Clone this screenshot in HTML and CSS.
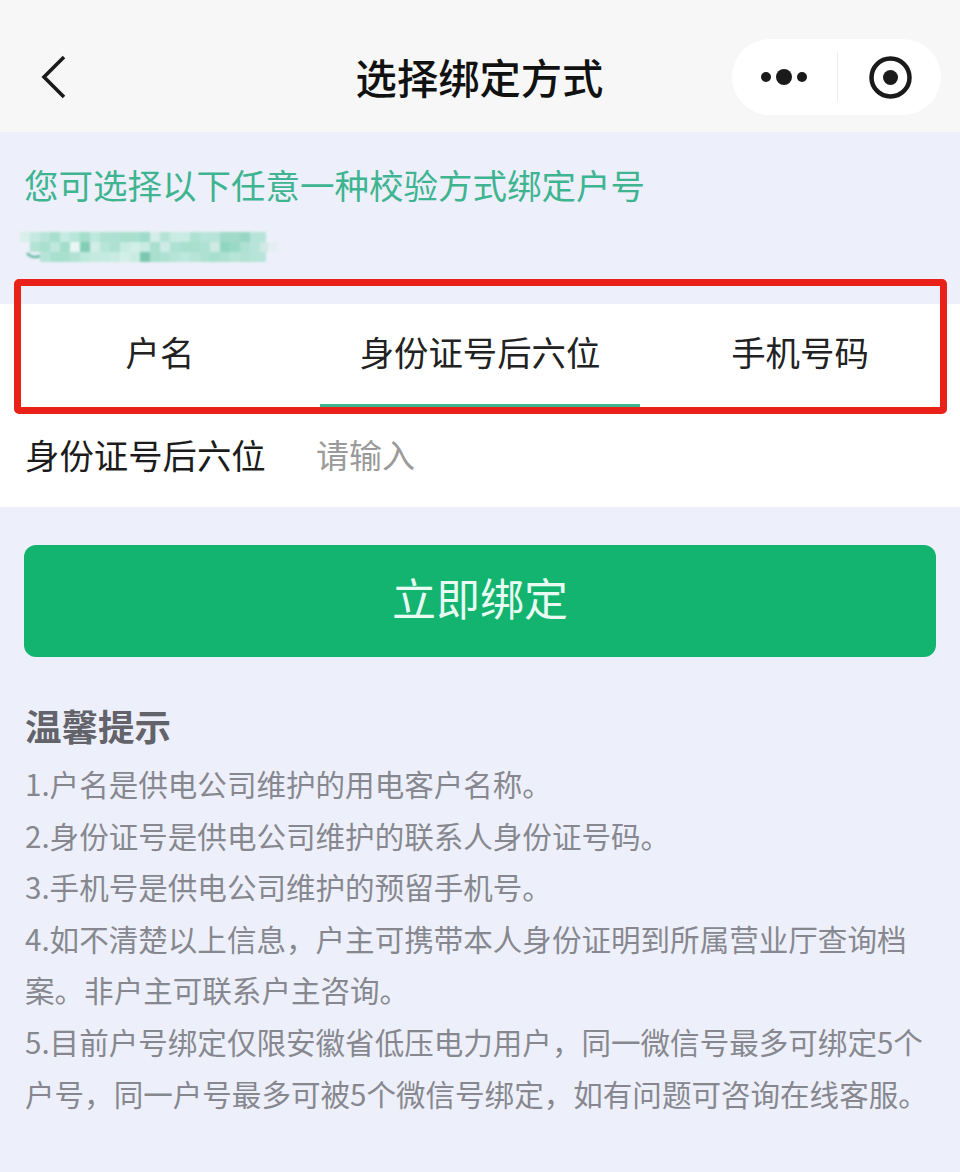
FILE: index.html
```html
<!DOCTYPE html>
<html lang="zh-CN">
<head>
<meta charset="utf-8">
<title>选择绑定方式</title>
<link rel="stylesheet" href="styles.css">
</head>
<body>
<div class="page">
  <header class="nav">
    <svg class="back" width="26" height="44" viewBox="0 0 26 44"><path d="M23 2 L3 22 L23 42" fill="none" stroke="#1a1a1a" stroke-width="3.6"/></svg>
    <h1 class="title">选择绑定方式</h1>
    <div class="capsule">
      <svg class="dots" width="46" height="18" viewBox="0 0 46 18"><circle cx="5" cy="9" r="5" fill="#1a1a1a"/><circle cx="23" cy="9" r="8" fill="#1a1a1a"/><circle cx="41" cy="9" r="5" fill="#1a1a1a"/></svg>
      <span class="sep"></span>
      <svg class="target" width="43" height="43" viewBox="0 0 43 43"><circle cx="21.5" cy="21.5" r="19" fill="none" stroke="#1a1a1a" stroke-width="4.5"/><circle cx="21.5" cy="21.5" r="7.5" fill="#1a1a1a"/></svg>
    </div>
  </header>
  <section class="intro">
    <p class="hint">您可选择以下任意一种校验方式绑定户号</p>
    <svg class="mosaic" width="257" height="30" viewBox="0 0 257 30">
      <path d="M7 21 q5 6 13 3" fill="none" stroke="#5fb8a0" stroke-width="2.5"/>
      <g>
        <rect x="0" y="0" width="10" height="10" fill="#d8efea"/><rect x="10" y="0" width="10" height="10" fill="#c5e9df"/><rect x="20" y="0" width="10" height="10" fill="#b7e4d8"/><rect x="30" y="0" width="10" height="10" fill="#a8dfcd"/><rect x="40" y="0" width="10" height="10" fill="#c5ebe1"/><rect x="50" y="0" width="10" height="10" fill="#b7e5d8"/><rect x="60" y="0" width="10" height="10" fill="#a5ddcb"/><rect x="70" y="0" width="10" height="10" fill="#bde8dc"/><rect x="80" y="0" width="10" height="10" fill="#aee1d1"/><rect x="90" y="0" width="10" height="10" fill="#aee1d1"/><rect x="100" y="0" width="10" height="10" fill="#a8dfcd"/><rect x="110" y="0" width="10" height="10" fill="#a8dfcd"/><rect x="120" y="0" width="10" height="10" fill="#a0dac8"/><rect x="130" y="0" width="10" height="10" fill="#d5ede9"/><rect x="140" y="0" width="10" height="10" fill="#b5e3d5"/><rect x="150" y="0" width="10" height="10" fill="#c9ebe2"/><rect x="160" y="0" width="10" height="10" fill="#c9ebe2"/><rect x="170" y="0" width="10" height="10" fill="#aee1d1"/><rect x="180" y="0" width="10" height="10" fill="#b7e4d8"/><rect x="190" y="0" width="10" height="10" fill="#b7e4d8"/><rect x="200" y="0" width="10" height="10" fill="#a0dac8"/><rect x="210" y="0" width="10" height="10" fill="#a0dac8"/><rect x="220" y="0" width="10" height="10" fill="#98d6c3"/><rect x="230" y="0" width="16" height="10" fill="#b7e4d8"/>
      </g>
      <g>
        <rect x="10" y="10" width="10" height="10" fill="#b2e2d3"/><rect x="20" y="10" width="10" height="10" fill="#a8dfcd"/><rect x="30" y="10" width="10" height="10" fill="#c0e8dc"/><rect x="40" y="10" width="10" height="10" fill="#a5ddcb"/><rect x="50" y="10" width="10" height="10" fill="#eaf6f4"/><rect x="60" y="10" width="10" height="10" fill="#82cdb4"/><rect x="70" y="10" width="10" height="10" fill="#d2ece6"/><rect x="80" y="10" width="10" height="10" fill="#b7e5d8"/><rect x="90" y="10" width="10" height="10" fill="#aee1d1"/><rect x="100" y="10" width="10" height="10" fill="#c9ebe2"/><rect x="110" y="10" width="10" height="10" fill="#d2efe7"/><rect x="120" y="10" width="10" height="10" fill="#c9ebe2"/><rect x="130" y="10" width="10" height="10" fill="#a8dfcd"/><rect x="140" y="10" width="10" height="10" fill="#cfeae5"/><rect x="150" y="10" width="10" height="10" fill="#aee1d1"/><rect x="160" y="10" width="10" height="10" fill="#a8dfcd"/><rect x="170" y="10" width="10" height="10" fill="#a8dfcd"/><rect x="180" y="10" width="10" height="10" fill="#aee1d1"/><rect x="190" y="10" width="10" height="10" fill="#cdeae3"/><rect x="200" y="10" width="10" height="10" fill="#8fd6bf"/><rect x="210" y="10" width="10" height="10" fill="#99d9c5"/><rect x="220" y="10" width="10" height="10" fill="#aee1d1"/><rect x="230" y="10" width="10" height="10" fill="#b7e4d8"/><rect x="240" y="10" width="8" height="10" fill="#cfeae4"/><rect x="248" y="10" width="9" height="10" fill="#e4eef2"/>
      </g>
      <g>
        <rect x="20" y="20" width="10" height="10" fill="#b7e4d8"/><rect x="30" y="20" width="10" height="10" fill="#a8dfcd"/><rect x="40" y="20" width="10" height="10" fill="#a8dfcd"/><rect x="50" y="20" width="10" height="10" fill="#b2e2d3"/><rect x="60" y="20" width="10" height="10" fill="#bde8dc"/><rect x="70" y="20" width="10" height="10" fill="#c5e9df"/><rect x="80" y="20" width="10" height="10" fill="#c5ebe1"/><rect x="90" y="20" width="10" height="10" fill="#c9ebe2"/><rect x="100" y="20" width="10" height="10" fill="#d2efe7"/><rect x="110" y="20" width="10" height="10" fill="#c9ebe2"/><rect x="120" y="20" width="10" height="10" fill="#7cc8ae"/><rect x="130" y="20" width="10" height="10" fill="#a8dfcd"/><rect x="140" y="20" width="10" height="10" fill="#aee1d1"/><rect x="150" y="20" width="10" height="10" fill="#b7e4d8"/><rect x="160" y="20" width="10" height="10" fill="#bde8dc"/><rect x="170" y="20" width="10" height="10" fill="#b7e4d8"/><rect x="180" y="20" width="10" height="10" fill="#aee1d1"/><rect x="190" y="20" width="10" height="10" fill="#a8dfcd"/><rect x="200" y="20" width="10" height="10" fill="#aee1d1"/><rect x="210" y="20" width="10" height="10" fill="#b7e4d8"/><rect x="220" y="20" width="10" height="10" fill="#b2e2d3"/><rect x="230" y="20" width="16" height="10" fill="#b7e4d8"/>
      </g>
    </svg>
  </section>
  <nav class="tabs">
    <div class="tab">户名</div>
    <div class="tab tab-active">身份证号后六位</div>
    <div class="tab">手机号码</div>
  </nav>
  <div class="field">
    <span class="field-label">身份证号后六位</span>
    <span class="field-input">请输入</span>
  </div>
  <div class="action"><button class="bind">立即绑定</button></div>
  <section class="tips">
    <h2 class="tips-title">温馨提示</h2>
    <p>1.户名是供电公司维护的用电客户名称。</p>
    <p>2.身份证号是供电公司维护的联系人身份证号码。</p>
    <p>3.手机号是供电公司维护的预留手机号。</p>
    <p>4.如不清楚以上信息，户主可携带本人身份证明到所属营业厅查询档案。非户主可联系户主咨询。</p>
    <p>5.目前户号绑定仅限安徽省低压电力用户，同一微信号最多可绑定5个户号，同一户号最多可被5个微信号绑定，如有问题可咨询在线客服。</p>
  </section>
  <div class="highlight"></div>
</div>
</body>
</html>
```
FILE: styles.css
```css
* { box-sizing: border-box; }
html, body { margin: 0; padding: 0; }
body { font-family: "Noto Sans CJK SC", "Liberation Sans", sans-serif; }
.page { position: relative; width: 960px; height: 1172px; background: #edf0fa; overflow: hidden; }
.nav { position: relative; height: 132px; padding-top: 22px; background: #f7f7f8; display: flex; align-items: center; justify-content: center; }
.back { position: absolute; left: 41px; top: 55px; }
.title { margin: 0 0 0 -1px; font-size: 41.3px; font-weight: 500; color: #111; line-height: 1; }
.capsule { position: absolute; left: 732px; top: 39px; width: 209px; height: 76px; border-radius: 38px; background: #fff; display: flex; align-items: center; padding-left: 29px; }
.sep { width: 1px; height: 50px; margin-left: 30px; background: #eee; }
.target { margin-left: 31px; }
.intro { height: 172px; padding: 28px 0 0 24px; }
.hint { margin: 0; font-size: 34.5px; line-height: 48px; color: #3fb491; }
.mosaic { display: block; margin-top: 24px; margin-left: -4px; filter: blur(1px); }
.tabs { display: flex; height: 109px; background: #fff; }
.tab { position: relative; flex: 1; display: flex; align-items: center; justify-content: center; padding-bottom: 15px; font-size: 34.4px; color: #222; }
.tab-active::after { content: ""; position: absolute; left: 0; right: 0; bottom: 6px; height: 3px; background: #3fb491; }
.field { height: 94px; background: #fff; display: flex; align-items: center; padding: 0 0 12px 25px; font-size: 34.4px; }
.field-label { width: 291px; color: #1c1c1c; }
.field-input { font-size: 33px; color: #9a9a9a; }
.action { padding: 38px 24px 0; }
.bind { display: block; width: 100%; height: 112px; padding: 0 0 8px; border: 0; border-radius: 12px; background: #13b370; color: #e8fbf2; font-family: inherit; font-size: 44px; }
.tips { padding: 43px 24px 0 25px; color: #87888f; font-size: 29.56px; line-height: 51.6px; }
.tips-title { margin: 0 0 6px; font-size: 36.5px; line-height: 52px; font-weight: 700; color: #62636b; }
.tips p { margin: 0; }
.highlight { position: absolute; left: 14px; top: 279px; width: 933px; height: 135px; border: 7px solid #ea2119; border-radius: 5px; }
```
